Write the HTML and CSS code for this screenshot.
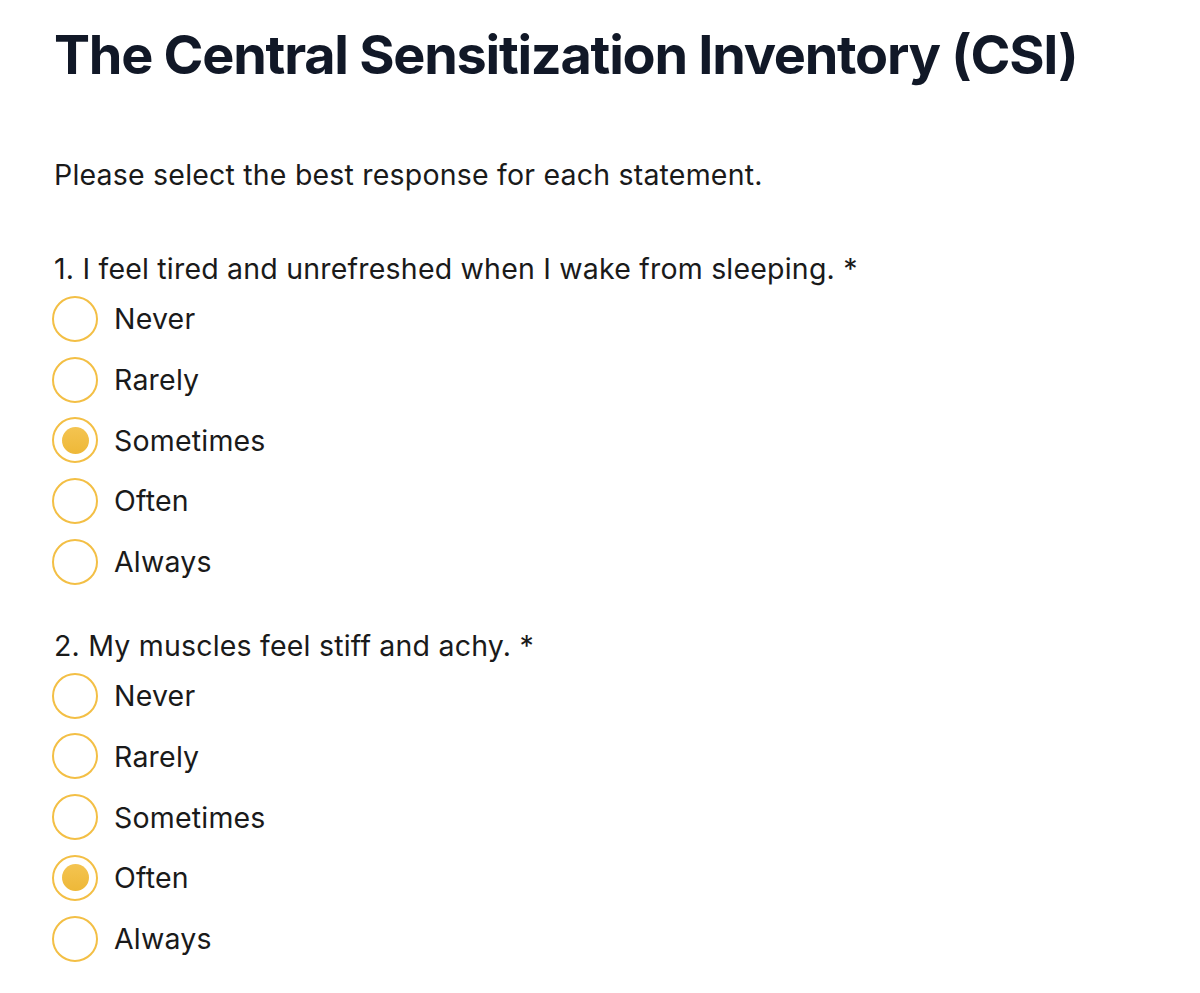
FILE: index.html
```html
<!DOCTYPE html>
<html>
<head>
<meta charset="utf-8">
<link rel="stylesheet" href="styles.css">
</head>
<body>
<main class="page">
  <h1 class="title">The Central Sensitization Inventory (CSI)</h1>
  <p class="intro">Please select the best response for each statement.</p>

  <fieldset class="question">
    <legend class="q-text">1. I feel tired and unrefreshed when I wake from sleeping. *</legend>
    <label class="option"><input type="radio" name="q1"><span class="radio"></span><span class="opt-label">Never</span></label>
    <label class="option"><input type="radio" name="q1"><span class="radio"></span><span class="opt-label">Rarely</span></label>
    <label class="option"><input type="radio" name="q1" checked><span class="radio"></span><span class="opt-label">Sometimes</span></label>
    <label class="option"><input type="radio" name="q1"><span class="radio"></span><span class="opt-label">Often</span></label>
    <label class="option"><input type="radio" name="q1"><span class="radio"></span><span class="opt-label">Always</span></label>
  </fieldset>

  <fieldset class="question">
    <legend class="q-text">2. My muscles feel stiff and achy. *</legend>
    <label class="option"><input type="radio" name="q2"><span class="radio"></span><span class="opt-label">Never</span></label>
    <label class="option"><input type="radio" name="q2"><span class="radio"></span><span class="opt-label">Rarely</span></label>
    <label class="option"><input type="radio" name="q2"><span class="radio"></span><span class="opt-label">Sometimes</span></label>
    <label class="option"><input type="radio" name="q2" checked><span class="radio"></span><span class="opt-label">Often</span></label>
    <label class="option"><input type="radio" name="q2"><span class="radio"></span><span class="opt-label">Always</span></label>
  </fieldset>
</main>
</body>
</html>
```

FILE: styles.css
```css
html, body {
  margin: 0;
  padding: 0;
  background: #ffffff;
}

body {
  font-family: Inter, "Noto Sans", "Liberation Sans", sans-serif;
  color: #1a1a1a;
}

.page {
  padding: 19px 0 0 54px;
}

.title {
  margin: 0;
  font-size: 54px;
  line-height: 72px;
  font-weight: 700;
  color: #111827;
  letter-spacing: -1.25px;
}

.intro {
  margin: 64px 0 0 0;
  font-size: 28.5px;
  line-height: 40px;
  letter-spacing: 0.2px;
  color: #1a1a1a;
}

.question {
  border: 0;
  margin: 0;
  padding: 0;
  min-width: 0;
}

.question + .question {
  margin-top: 34px;
}

.intro + .question {
  margin-top: 54px;
}

.q-text {
  padding: 0;
  font-size: 28.5px;
  line-height: 40px;
  letter-spacing: 0.2px;
  margin-bottom: -0.5px;
}

.option {
  display: flex;
  align-items: center;
  height: 60.7px;
  gap: 16px;
  font-size: 28.5px;
  letter-spacing: 0.2px;
}

.option input {
  display: none;
}

.radio {
  box-sizing: border-box;
  width: 46px;
  height: 46px;
  margin-left: -2px;
  border-radius: 50%;
  border: 2px solid #f3bf45;
  display: flex;
  align-items: center;
  justify-content: center;
  flex: none;
}

.option input:checked + .radio::after {
  content: "";
  width: 27px;
  height: 27px;
  border-radius: 50%;
  background: linear-gradient(#f4c451, #eeb838);
}

.opt-label {
  color: #1a1a1a;
}
```
